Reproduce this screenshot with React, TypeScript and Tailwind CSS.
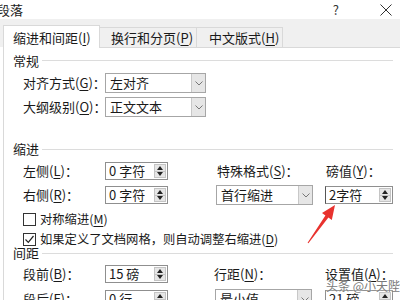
import React from 'react';

// Word "段落" dialog, first tab
const Key: React.FC<{ t: string; k: string; colon?: boolean }> = ({ t, k, colon = true }) => (
  <span className="whitespace-nowrap">
    {t}(<u className="underline-offset-2">{k}</u>){colon ? '：' : ''}
  </span>
);

const Spin: React.FC<{ value: string; className?: string }> = ({ value, className = 'w-[63px]' }) => (
  <div className={`flex h-[18px] border border-[#8f8f8f] bg-white ${className}`}>
    <span className="flex-1 pl-[3px] leading-[16px] whitespace-nowrap">{value}</span>
    <div className="my-[1px] mr-[1px] flex w-[12px] flex-col border border-[#c4c4c4] bg-[#e6e6e6]">
      <div className="flex flex-1 items-center justify-center border-b border-[#c4c4c4]">
        <div className="h-0 w-0 border-x-[3px] border-b-[4px] border-x-transparent border-b-[#222]" />
      </div>
      <div className="flex flex-1 items-center justify-center">
        <div className="h-0 w-0 border-x-[3px] border-t-[4px] border-x-transparent border-t-[#222]" />
      </div>
    </div>
  </div>
);

const Drop: React.FC<{ value: string; className?: string }> = ({ value, className = 'w-[101px]' }) => (
  <div className={`flex h-[20px] border border-[#a6a6a6] bg-white ${className}`}>
    <span className="flex-1 pl-[4px] leading-[18px] whitespace-nowrap">{value}</span>
    <div className="flex w-[14px] items-center justify-center border-l border-[#c8c8c8] bg-[#e6e6e6]">
      <svg width="8" height="5" viewBox="0 0 8 5">
        <path d="M0.5 0.5 L4 4 L7.5 0.5" fill="none" stroke="#777" strokeWidth="1" />
      </svg>
    </div>
  </div>
);

const Section: React.FC<{ title: string; className?: string }> = ({ title, className = '' }) => (
  <div className={`flex items-center pl-[9px] pr-[7px] ${className}`}>
    <span className="leading-[14px]">{title}</span>
    <div className="ml-[3px] h-px flex-1 bg-[#dcdcdc]" />
  </div>
);

const Check: React.FC<{ checked?: boolean; children: React.ReactNode }> = ({ checked, children }) => (
  <div className="flex h-[20px] items-center pl-[19px]">
    <div className="flex h-[13px] w-[13px] items-center justify-center border border-[#333] bg-white">
      {checked && (
        <svg width="11" height="11" viewBox="0 0 11 11">
          <path d="M1.5 5.5 L4.3 8.3 L9.5 2" fill="none" stroke="#222" strokeWidth="1.2" />
        </svg>
      )}
    </div>
    <span className="ml-[4px] whitespace-nowrap text-[12.3px]">{children}</span>
  </div>
);

export default function App() {
  return (
    <div className="relative h-[300px] w-[400px] overflow-hidden bg-white font-['Noto_Sans_CJK_SC','Noto_Sans',sans-serif] text-[13px] text-[#1a1a1a]">
      {/* title bar */}
      <div className="flex h-[19px] items-center">
        <span className="ml-[-3px] text-[13px]">段落</span>
        <span className="ml-auto mr-[41px] text-[13px] text-[#333]">?</span>
        <svg className="mr-[8px]" width="12" height="12" viewBox="0 0 12 12">
          <path d="M0.5 0.5 L11.5 11.5 M11.5 0.5 L0.5 11.5" stroke="#333" strokeWidth="1" />
        </svg>
      </div>

      {/* tabs */}
      <div className="flex h-[28px] items-end bg-[#f0f0f0] pl-[3px]">
        <div className="relative z-10 -mb-px h-[23px] w-[97px] border border-b-0 border-[#d9d9d9] bg-white pl-[9px] leading-[24px]">
          <Key t="缩进和间距" k="I" colon={false} />
        </div>
        <div className="h-[20px] w-[97px] border-r border-t border-[#d9d9d9] pl-[11px] leading-[19px]">
          <Key t="换行和分页" k="P" colon={false} />
        </div>
        <div className="h-[20px] w-[86px] border-r border-t border-[#d9d9d9] pl-[12px] leading-[19px]">
          <Key t="中文版式" k="H" colon={false} />
        </div>
      </div>

      {/* panel */}
      <div className="ml-[3px] h-[253px] border-l border-t border-[#d9d9d9] bg-white">
        <Section title="常规" className="h-[25px]" />

        <div className="flex h-[20px] items-center pl-[19px]">
          <div className="w-[82px]"><Key t="对齐方式" k="G" /></div>
          <Drop value="左对齐" />
        </div>
        <div className="mt-[4px] flex h-[20px] items-center pl-[19px]">
          <div className="w-[82px]"><Key t="大纲级别" k="O" /></div>
          <Drop value="正文文本" />
        </div>

        <Section title="缩进" className="mt-[19px] h-[26px]" />

        <div className="flex h-[18px] items-center pl-[19px]">
          <div className="w-[82px]"><Key t="左侧" k="L" /></div>
          <div className="w-[111px]"><Spin value="0 字符" /></div>
          <div className="w-[109px] pl-[1px]"><Key t="特殊格式" k="S" /></div>
          <div className="pl-[1px]"><Key t="磅值" k="Y" /></div>
        </div>
        <div className="mt-[5px] flex h-[20px] items-center pl-[19px]">
          <div className="w-[82px]"><Key t="右侧" k="R" /></div>
          <div className="w-[111px]"><Spin value="0 字符" /></div>
          <div className="w-[109px]"><Drop value="首行缩进" className="w-[97px]" /></div>
          <Spin value="2字符" className="w-[68px] border-l-[#555]" />
        </div>

        <div className="mt-[4px]">
          <Check><Key t="对称缩进" k="M" colon={false} /></Check>
          <Check checked>
            如果定义了文档网格，则自动调整右缩进(<u className="underline-offset-2">D</u>)
          </Check>
        </div>

        <Section title="间距" className="h-[8px]" />

        <div className="mt-[8px] flex h-[18px] items-center pl-[19px]">
          <div className="w-[82px]"><Key t="段前" k="B" /></div>
          <div className="w-[111px]"><Spin value="15 磅" /></div>
          <div className="ml-[-2px] w-[109px]"><Key t="行距" k="N" /></div>
          <div className="ml-[2px]"><Key t="设置值" k="A" /></div>
        </div>
        <div className="mt-[6px] flex h-[20px] items-center pl-[19px]">
          <div className="w-[82px]"><Key t="段后" k="F" /></div>
          <div className="w-[110px]"><Spin value="0 行" /></div>
          <div className="w-[110px]"><Drop value="最小值" className="w-[97px]" /></div>
          <Spin value="21 磅" className="w-[68px]" />
        </div>
      </div>

      {/* red annotation arrow */}
      <svg className="pointer-events-none absolute left-0 top-0" width="400" height="300" viewBox="0 0 400 300">
        <polygon
          points="307.6,242.7 325.4,215.4 322,212.9 335,205 331.8,219.9 328.4,217.4 308.4,243.3"
          fill="#e8322e"
        />
      </svg>

      {/* watermark */}
      <span className="pointer-events-none absolute left-[326px] top-[279px] whitespace-nowrap text-[12px] leading-[14px] text-[#7a7a7a] [text-shadow:0_0_2px_#fff]">
        头条 @小天陛
      </span>
    </div>
  );
}
